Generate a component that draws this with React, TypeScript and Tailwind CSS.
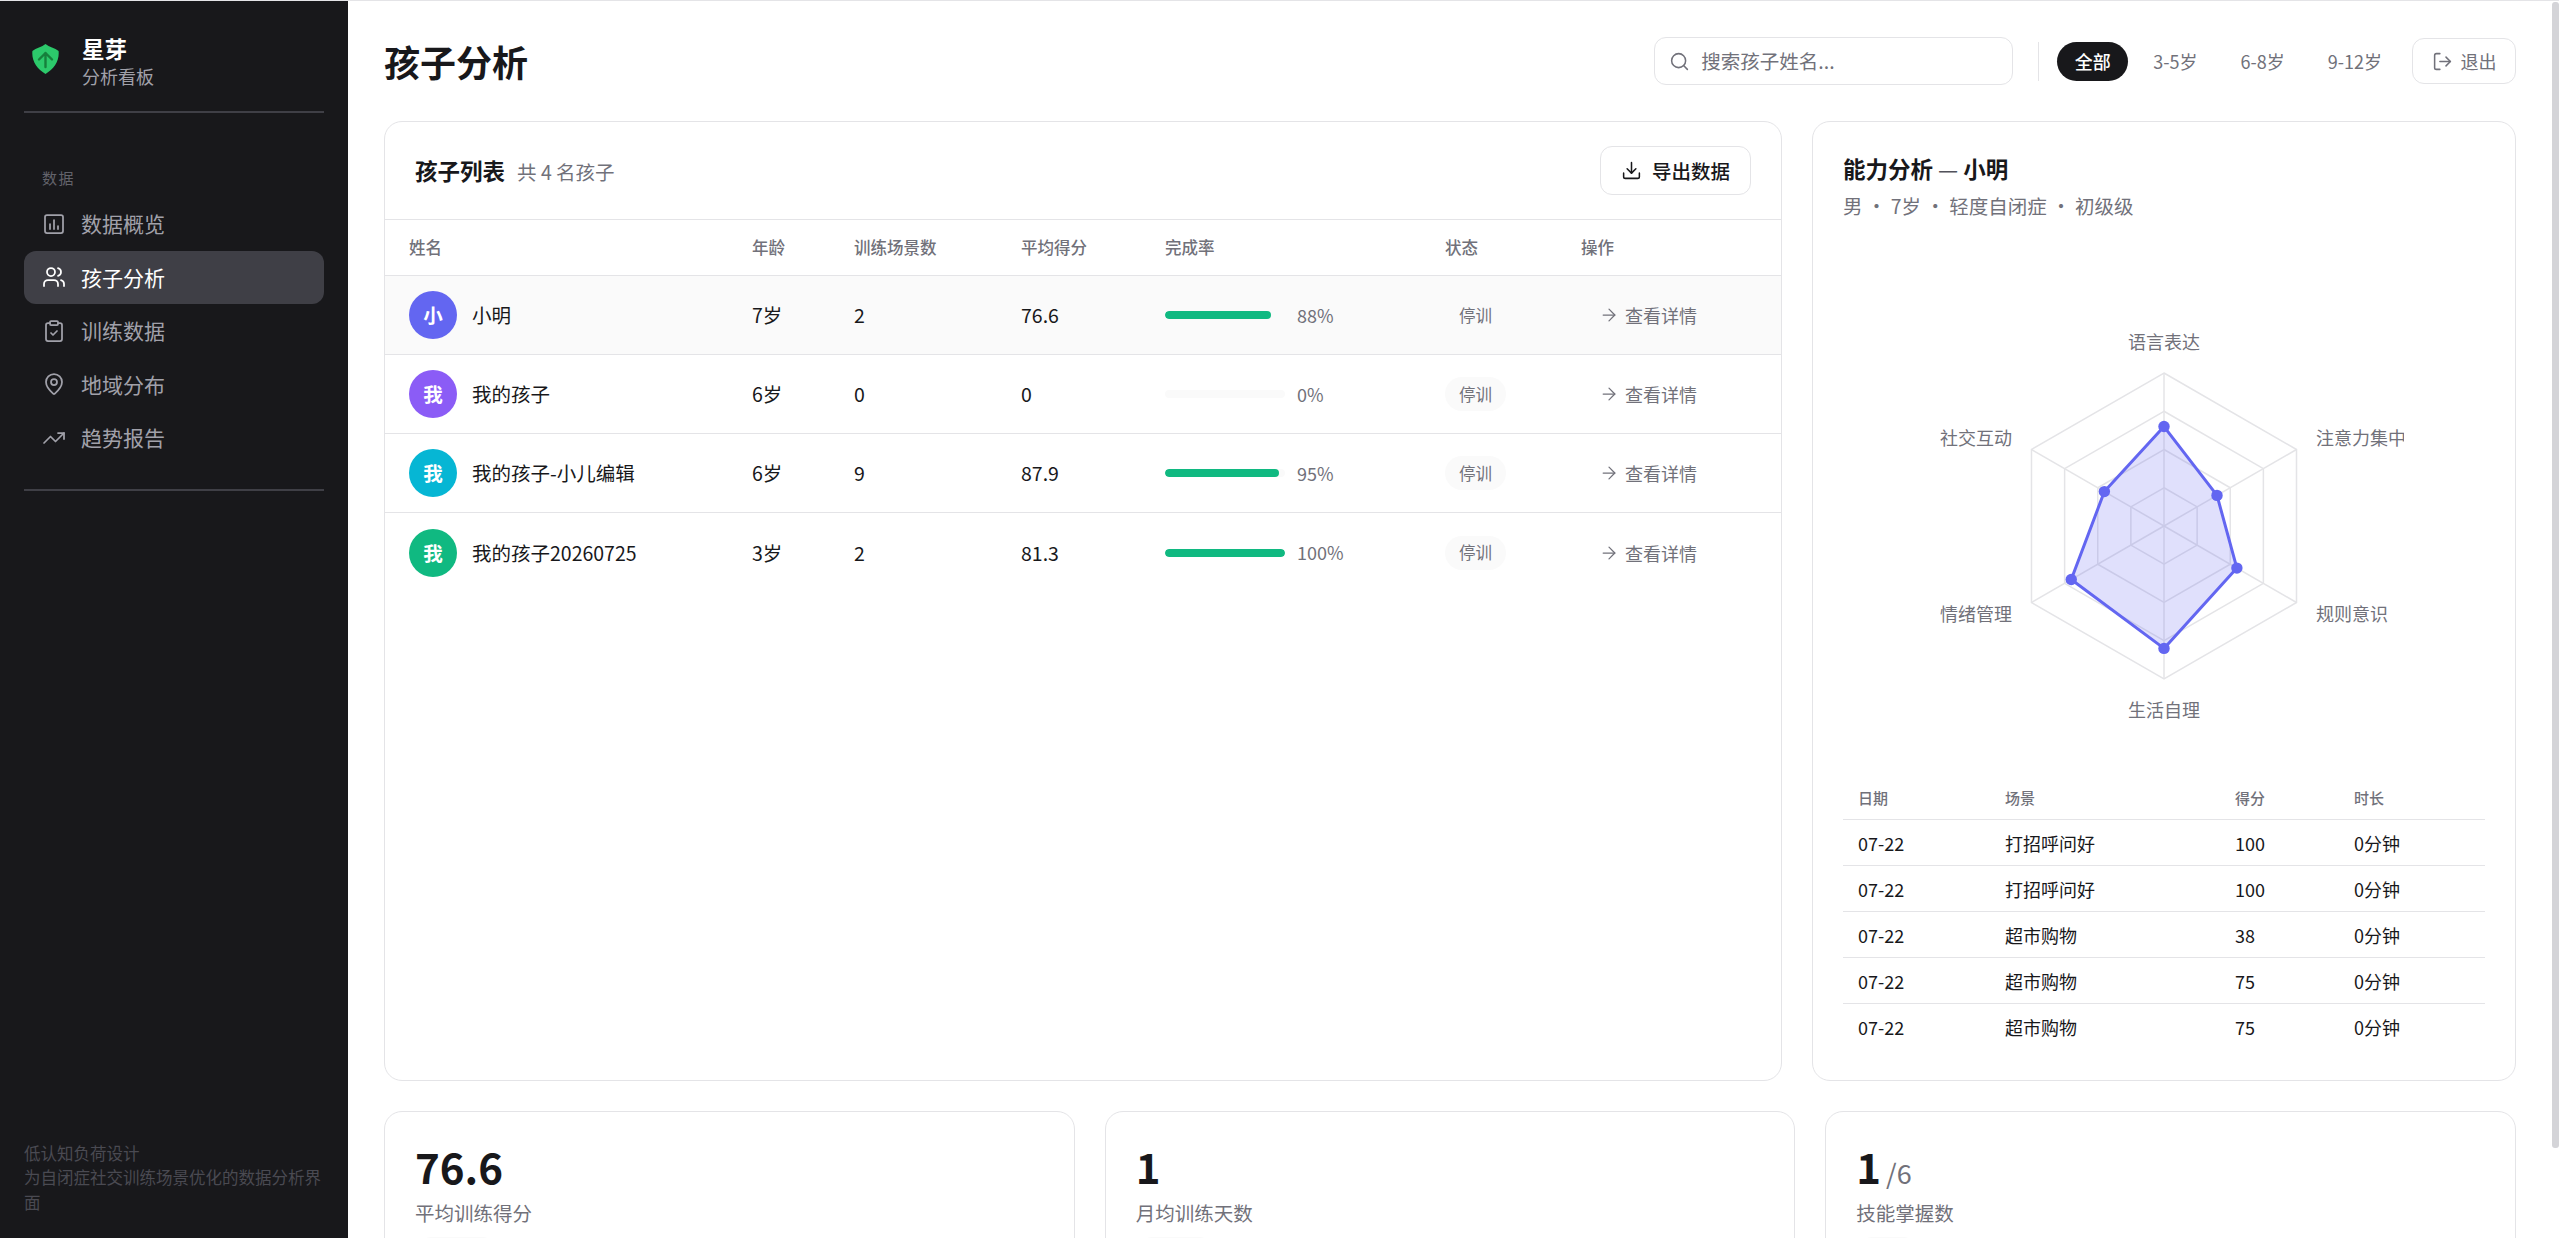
import React from 'react';
import { Users, ClipboardCheck, MapPin, TrendingUp, Search, LogOut, Download, ArrowRight } from 'lucide-react';

function ChartBox({ size = 24 }: { size?: number }) {
  return (
    <svg width={size} height={size} viewBox="0 0 24 24" fill="none" stroke="currentColor" strokeWidth={1.75} strokeLinecap="round" strokeLinejoin="round">
      <rect x="3" y="3" width="18" height="18" rx="2" />
      <path d="M8 17v-5" />
      <path d="M12 17V8" />
      <path d="M16 17v-3" />
    </svg>
  );
}

function Logo() {
  return (
    <svg width="27" height="30" viewBox="0 0 27 30" fill="none" className="mb-[4px] shrink-0">
      <path d="M13.5 0C17 3 23 4 26.6 7 27.6 17 22 25 13.5 30 5 25-.6 17 .4 7 4 4 10 3 13.5 0Z" fill="#2cc96b" />
      <path d="M13.5 23V9M7 15.5l6.5-6.5 6.5 6.5" stroke="#16803c" strokeWidth="2.4" strokeLinecap="round" strokeLinejoin="round" />
    </svg>
  );
}

const nav = [
  { label: '数据概览', icon: <ChartBox /> },
  { label: '孩子分析', icon: <Users size={24} strokeWidth={1.75} />, active: true },
  { label: '训练数据', icon: <ClipboardCheck size={24} strokeWidth={1.75} /> },
  { label: '地域分布', icon: <MapPin size={24} strokeWidth={1.75} /> },
  { label: '趋势报告', icon: <TrendingUp size={24} strokeWidth={1.75} /> },
];

const kids = [
  { ch: '小', color: 'bg-[#6366f1]', name: '小明', age: '7岁', scenes: '2', score: '76.6', rate: 88, hl: true },
  { ch: '我', color: 'bg-[#8b5cf6]', name: '我的孩子', age: '6岁', scenes: '0', score: '0', rate: 0 },
  { ch: '我', color: 'bg-[#06b6d4]', name: '我的孩子-小儿编辑', age: '6岁', scenes: '9', score: '87.9', rate: 95 },
  { ch: '我', color: 'bg-[#10b981]', name: '我的孩子20260725', age: '3岁', scenes: '2', score: '81.3', rate: 100, last: true },
];

const records = [
  ['07-22', '打招呼问好', '100', '0分钟'],
  ['07-22', '打招呼问好', '100', '0分钟'],
  ['07-22', '超市购物', '38', '0分钟'],
  ['07-22', '超市购物', '75', '0分钟'],
  ['07-22', '超市购物', '75', '0分钟'],
];

const stats = [
  { v: '76.6', l: '平均训练得分', pill: 'w-[84px]' },
  { v: '1', l: '月均训练天数', pill: 'w-[80px]' },
  { v: '1', suffix: '/6', l: '技能掌握数', pill: 'w-[64px]' },
];

const kidCols = 'grid grid-cols-[343px_102px_167px_144px_280px_136px_224px] items-center';
const recCols = 'grid grid-cols-[147px_230px_119px_146px] items-center';

function Radar() {
  const cx = 240, cy = 240, R = 153;
  const pt = (i: number, f: number) => {
    const a = (Math.PI / 3) * i - Math.PI / 2;
    return [cx + R * f * Math.cos(a), cy + R * f * Math.sin(a)];
  };
  const ring = (f: number) => [0, 1, 2, 3, 4, 5].map((i) => pt(i, f).join(',')).join(' ');
  const vals = [0.65, 0.4, 0.55, 0.8, 0.7, 0.45];
  const poly = vals.map((v, i) => pt(i, v).join(',')).join(' ');
  const labels: [string, number, number, 'start' | 'middle' | 'end'][] = [
    ['语言表达', 240, 58, 'middle'],
    ['注意力集中', 392, 154, 'start'],
    ['规则意识', 392, 330, 'start'],
    ['生活自理', 240, 426, 'middle'],
    ['情绪管理', 88, 330, 'end'],
    ['社交互动', 88, 154, 'end'],
  ];
  return (
    <svg width="480" height="480" viewBox="0 0 480 480" className="mt-[66px] mb-[12px] mx-auto block">
      {[1, 0.75, 0.5, 0.25].map((f) => (
        <polygon key={f} points={ring(f)} fill="none" stroke="#e4e4e7" strokeWidth="1.5" />
      ))}
      {[0, 1, 2, 3, 4, 5].map((i) => {
        const [x, y] = pt(i, 1);
        return <line key={i} x1={cx} y1={cy} x2={x} y2={y} stroke="#e4e4e7" strokeWidth="1.5" />;
      })}
      <polygon points={poly} fill="#6366f1" fillOpacity="0.2" stroke="#6366f1" strokeWidth="3" strokeLinejoin="round" />
      {vals.map((v, i) => {
        const [x, y] = pt(i, v);
        return <circle key={i} cx={x} cy={y} r="5.7" fill="#6366f1" />;
      })}
      {labels.map(([t, x, y, anchor]) => (
        <text key={t} x={x} y={y} textAnchor={anchor} dominantBaseline="middle" fontSize="18" fill="#71717a">
          {t}
        </text>
      ))}
    </svg>
  );
}

export default function App() {
  return (
    <div className="relative h-screen flex overflow-hidden border-t border-[#e4e4e7] bg-white text-[#18181b] font-['Noto_Sans_CJK_SC','Noto_Sans',sans-serif]">
      <aside className="w-[348px] shrink-0 h-full bg-[#18181b] flex flex-col px-6">
        <div className="h-[110px] flex items-center shrink-0 pl-2 pt-[10px]">
          <Logo />
          <div className="ml-[23px]">
            <div className="text-[22.5px] leading-[30px] font-bold text-white">星芽</div>
            <div className="text-[18px] leading-[26px] text-[#a1a1aa]">分析看板</div>
          </div>
        </div>
        <div className="h-[2px] bg-[#3f3f46] shrink-0" />
        <div className="text-[15px] leading-[20px] tracking-[1.5px] text-[#63636b] pl-[18px] mt-[55px] mb-[9px]">数据</div>
        <nav className="flex flex-col">
          {nav.map((n) => (
            <div
              key={n.label}
              className={`h-[53.5px] rounded-xl flex items-center gap-[15px] pl-[18px] text-[21px] ${n.active ? 'bg-[#3f3f46] text-white' : 'text-[#a1a1aa]'}`}
            >
              {n.icon}
              <span>{n.label}</span>
            </div>
          ))}
        </nav>
        <div className="h-[2px] bg-[#3f3f46] shrink-0 mt-[24px]" />
        <div className="mt-auto mb-[24px] text-[16.5px] leading-[24.5px] text-[#4a4a52]">
          <div>低认知负荷设计</div>
          <div>为自闭症社交训练场景优化的数据分析界面</div>
        </div>
      </aside>

      <main className="flex-1 min-w-0 h-full overflow-y-auto pl-9 pr-[43px] pt-9 pb-[32px]">
        <header className="flex items-center justify-between h-[48px]">
          <h1 className="text-[36px] leading-[48px] font-bold">孩子分析</h1>
          <div className="flex items-center">
            <div className="w-[359px] h-[48px] border border-[#e4e4e7] rounded-xl flex items-center pl-[14px] gap-[11px]">
              <Search size={21} strokeWidth={1.75} className="text-[#71717a] shrink-0" />
              <input
                placeholder="搜索孩子姓名..."
                className="flex-1 min-w-0 outline-none bg-transparent text-[19.5px] placeholder:text-[#71717a]"
              />
            </div>
            <div className="w-[1px] h-[39px] bg-[#e4e4e7] ml-[25px] mr-[18px]" />
            <div className="flex items-center gap-[7px]">
              <div className="h-[39px] w-[71px] rounded-full bg-[#18181b] text-white text-[18px] font-medium flex items-center justify-center">全部</div>
              {['3-5岁', '6-8岁', '9-12岁'].map((a) => (
                <div key={a} className="h-[39px] px-[18px] rounded-full text-[#71717a] text-[18px] flex items-center">{a}</div>
              ))}
            </div>
            <button className="ml-[12px] h-[46px] w-[104px] border border-[#e4e4e7] rounded-xl flex items-center justify-center gap-[8px] text-[#71717a] text-[18px]">
              <LogOut size={21} strokeWidth={1.75} className="-scale-x-100 rotate-180" />
              退出
            </button>
          </div>
        </header>

        <div className="grid grid-cols-[1398px_704px] gap-[30px] mt-9">
          <section className="border border-[#e4e4e7] rounded-[18px] overflow-hidden">
            <div className="h-[98px] border-b border-[#e4e4e7] flex items-center justify-between pl-[30px] pr-[30px]">
              <div className="flex items-baseline gap-3">
                <span className="text-[22.5px] font-bold">孩子列表</span>
                <span className="text-[19.5px] text-[#71717a]">共 4 名孩子</span>
              </div>
              <button className="h-[49px] w-[151px] border border-[#e4e4e7] rounded-xl flex items-center justify-center gap-[10px] text-[19.5px] font-medium">
                <Download size={21} strokeWidth={1.75} />
                导出数据
              </button>
            </div>
            <div className={`${kidCols} h-[56px] border-b border-[#e4e4e7] text-[16.5px] font-medium text-[#71717a]`}>
              {['姓名', '年龄', '训练场景数', '平均得分', '完成率', '状态', '操作'].map((h) => (
                <div key={h} className="pl-6">{h}</div>
              ))}
            </div>
            {kids.map((k) => (
              <div key={k.name} className={`${kidCols} h-[79px] text-[19.5px] ${k.last ? '' : 'border-b border-[#e4e4e7]'} ${k.hl ? 'bg-[#fafafa]' : ''}`}>
                <div className="pl-6 flex items-center gap-[15px]">
                  <div className={`w-12 h-12 rounded-full ${k.color} text-white text-[19.5px] font-bold flex items-center justify-center`}>{k.ch}</div>
                  <span>{k.name}</span>
                </div>
                <div className="pl-6">{k.age}</div>
                <div className="pl-6">{k.scenes}</div>
                <div className="pl-6">{k.score}</div>
                <div className="pl-6 flex items-center gap-3">
                  <div className="w-[120px] h-2 rounded-full bg-[#fafafa] overflow-hidden">
                    <div className="h-full rounded-full bg-[#10b981]" style={{ width: `${k.rate}%` }} />
                  </div>
                  <span className="text-[18px] text-[#71717a]">{k.rate}%</span>
                </div>
                <div className="pl-6 flex items-center">
                  <span className="inline-flex h-[34px] w-[61px] rounded-full bg-[#fafafa] text-[16.5px] text-[#71717a] items-center justify-center">停训</span>
                </div>
                <div className="pl-6 flex items-center">
                  <span className="ml-[18px] flex items-center gap-[6px] text-[18px] leading-[28px] text-[#71717a]">
                    <ArrowRight size={20} strokeWidth={1.5} />
                    查看详情
                  </span>
                </div>
              </div>
            ))}
          </section>

          <section className="border border-[#e4e4e7] rounded-[18px] px-[30px] pt-[28px] pb-[30px]">
            <div className="text-[22.5px] leading-[36px] font-bold">
              能力分析 <span className="font-normal text-[#52525b]">—</span> 小明
            </div>
            <div className="text-[19.5px] leading-[28px] mt-[6px] text-[#71717a]">男 · 7岁 · 轻度自闭症 · 初级级</div>
            <Radar />
            <div className={`${recCols} h-[42px] border-b border-[#e4e4e7] text-[15px] font-medium text-[#71717a]`}>
              {['日期', '场景', '得分', '时长'].map((h) => (
                <div key={h} className="pl-[15px]">{h}</div>
              ))}
            </div>
            {records.map((r, i) => (
              <div key={i} className={`${recCols} h-[46px] text-[18px] pt-[1px] ${i < records.length - 1 ? 'border-b border-[#e4e4e7]' : ''}`}>
                {r.map((c, j) => (
                  <div key={j} className="pl-[15px]">{c}</div>
                ))}
              </div>
            ))}
          </section>
        </div>

        <div className="grid grid-cols-3 gap-[30px] mt-[30px]">
          {stats.map((s) => (
            <section key={s.l} className="border border-[#e4e4e7] rounded-[18px] p-[30px]">
              <div className="flex items-baseline h-[51px] leading-[48px]">
                <span className="text-[42px] font-bold">{s.v}</span>
                {s.suffix && <span className="text-[27px] text-[#71717a] ml-[5px]">{s.suffix}</span>}
              </div>
              <div className="text-[19.5px] leading-[30px] mt-[5px] text-[#71717a]">{s.l}</div>
              <div className={`h-[34px] mt-[9px] rounded-full bg-[#fafafa] ${s.pill}`} />
            </section>
          ))}
        </div>
      </main>

      <div className="absolute right-0 top-[1px] w-[7px] h-[1146px] rounded-[3px] bg-[#d4d4d8]" />
    </div>
  );
}
